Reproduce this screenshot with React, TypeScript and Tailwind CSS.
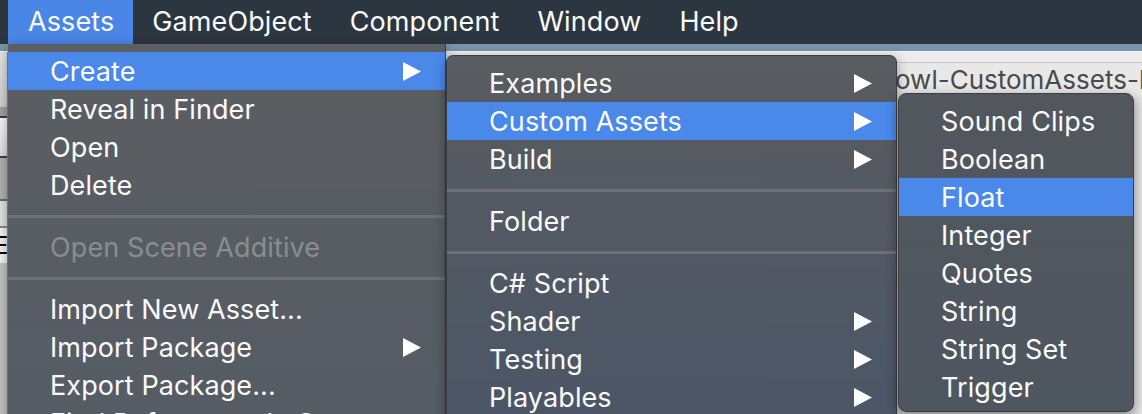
import React from "react";

const Arrow = () => (
  <svg width="18" height="19" viewBox="0 0 18 19" className="shrink-0">
    <polygon points="0,0 18,9.5 0,19" fill="#ffffff" />
  </svg>
);

type Item = { label?: string; sub?: boolean; active?: boolean; disabled?: boolean; sep?: boolean };

const Row = ({ item, padL }: { item: Item; padL: string }) => {
  if (item.sep) {
    return (
      <div className="h-[24px] flex items-center">
        <div className="h-[3px] w-full bg-[#6d7177]" />
      </div>
    );
  }
  return (
    <div
      className={`h-[38px] flex items-center justify-between pr-[24px] ${padL} ${
        item.active ? "bg-[#4a88ea]" : ""
      }`}
    >
      <span
        className={`text-[27px] leading-none whitespace-nowrap tracking-[0.1px] ${
          item.disabled ? "text-[#8a8d91]" : "text-[#fafafa]"
        }`}
      >
        {item.label}
      </span>
      {item.sub && <Arrow />}
    </div>
  );
};

const menu1: Item[] = [
  { label: "Create", sub: true, active: true },
  { label: "Reveal in Finder" },
  { label: "Open" },
  { label: "Delete" },
  { sep: true },
  { label: "Open Scene Additive", disabled: true },
  { sep: true },
  { label: "Import New Asset..." },
  { label: "Import Package", sub: true },
  { label: "Export Package..." },
  { label: "Find References In Scene" },
];

const menu2: Item[] = [
  { label: "Examples", sub: true },
  { label: "Custom Assets", sub: true, active: true },
  { label: "Build", sub: true },
  { sep: true },
  { label: "Folder" },
  { sep: true },
  { label: "C# Script" },
  { label: "Shader", sub: true },
  { label: "Testing", sub: true },
  { label: "Playables", sub: true },
];

const menu3: Item[] = [
  { label: "Sound Clips" },
  { label: "Boolean" },
  { label: "Float", active: true },
  { label: "Integer" },
  { label: "Quotes" },
  { label: "String" },
  { label: "String Set" },
  { label: "Trigger" },
];

export default function App() {
  const bar = ["Assets", "GameObject", "Component", "Window", "Help"];
  return (
    <div className="relative w-[1142px] h-[414px] overflow-hidden bg-[#e4e4e4] font-['Inter',sans-serif]">
      {/* menu bar */}
      <div className="h-[44px] bg-[#2c3640] flex items-stretch pl-[8px]">
        {bar.map((b, i) => (
          <div
            key={b}
            className={`flex items-center text-[27px] tracking-[0.1px] text-[#fafafa] ${
              i === 0 ? "bg-[#4a86e6] pl-[20px] pr-[19px]" : "px-[19px]"
            }`}
          >
            {b}
          </div>
        ))}
      </div>
      <div className="h-[7px] bg-[#7895ad]" />
      <div className="h-px bg-[#f4f4f4]" />
      {/* editor background */}
      <div className="flex h-[362px]">
        <div className="w-[8px] flex flex-col border-r border-[#8a8a8a]">
          <div className="h-[55px] bg-gradient-to-b from-[#e6e6e6] to-[#cfcfcf]" />
          <div className="h-[11px] bg-[#a2a2a2] border-b-2 border-[#3e3e3e]" />
          <div className="h-[40px] bg-gradient-to-b from-[#fafafa] to-[#dcdcdc] border-b-2 border-[#3e3e3e]" />
          <div className="h-[43px] bg-[#b2b2b2] border-b-2 border-[#6a6a6a]" />
          <div className="h-[27px] bg-[#e2e2e2] border-b-2 border-[#8a8a8a]" />
          <div className="h-[35px] bg-[#f2f2f2] text-[24px] leading-[35px] text-black -ml-[6px] overflow-hidden">E</div>
          <div className="flex-1 bg-[#c4c4c4]" />
        </div>
        <div className="flex-1 flex flex-col">
          <div className="h-[11px] bg-[#ececec] border-b border-[#c2c2c2]" />
          <div className="h-[34px] bg-[#e8e8e8] pl-[887px] whitespace-nowrap text-[26px] leading-[34px] text-[#4a4a4a] overflow-hidden">
            owl-CustomAssets-Build
          </div>
          <div className="flex-1 flex justify-end">
            <div className="w-[8px] flex flex-col">
              <div className="h-[78px] bg-[#cfcfcf]" />
              <div className="h-[38px] bg-[#d2d2d2] text-[24px] leading-[38px] text-black overflow-hidden">t</div>
              <div className="h-[16px] bg-[#bdbdbd]" />
              <div className="h-[8px] bg-[#e6e6e6]" />
              <div className="h-[22px] bg-[#5d79a2]" />
              <div className="h-[31px] bg-[#f4f4f4] text-[24px] leading-[31px] text-black overflow-hidden">a</div>
              <div className="h-[27px] bg-[#5d79a2]" />
              <div className="flex-1 bg-[#f4f4f4] text-[24px] leading-[80px] text-black overflow-hidden">U</div>
            </div>
          </div>
        </div>
      </div>

      {/* menu 1 */}
      <div className="absolute left-[8px] top-[44px] w-[438px] h-[420px] pt-[8px] bg-gradient-to-b from-[#5b5e62] to-[#555c65] border-r border-[#3b3e42] shadow-[0_4px_12px_rgba(0,0,0,0.4)]">
        {menu1.map((it, i) => (
          <Row key={i} item={it} padL="pl-[42px]" />
        ))}
      </div>

      {/* menu 2 */}
      <div className="absolute left-[446px] top-[55px] w-[451px] h-[400px] pt-[8px] rounded-t-[7px] bg-gradient-to-b from-[#595c60] to-[#4a5567] border border-[#3b3e42] shadow-[0_4px_12px_rgba(0,0,0,0.4)] overflow-hidden">
        {menu2.map((it, i) => (
          <Row key={i} item={it} padL="pl-[42px]" />
        ))}
      </div>

      {/* menu 3 */}
      <div className="absolute left-[898px] top-[93px] w-[236px] h-[319px] pt-[8px] rounded-[8px] bg-gradient-to-b from-[#52575d] to-[#4e5660] border border-[#3b3e42] shadow-[0_4px_12px_rgba(0,0,0,0.45)] overflow-hidden">
        {menu3.map((it, i) => (
          <Row key={i} item={it} padL="pl-[42px]" />
        ))}
      </div>
    </div>
  );
}
